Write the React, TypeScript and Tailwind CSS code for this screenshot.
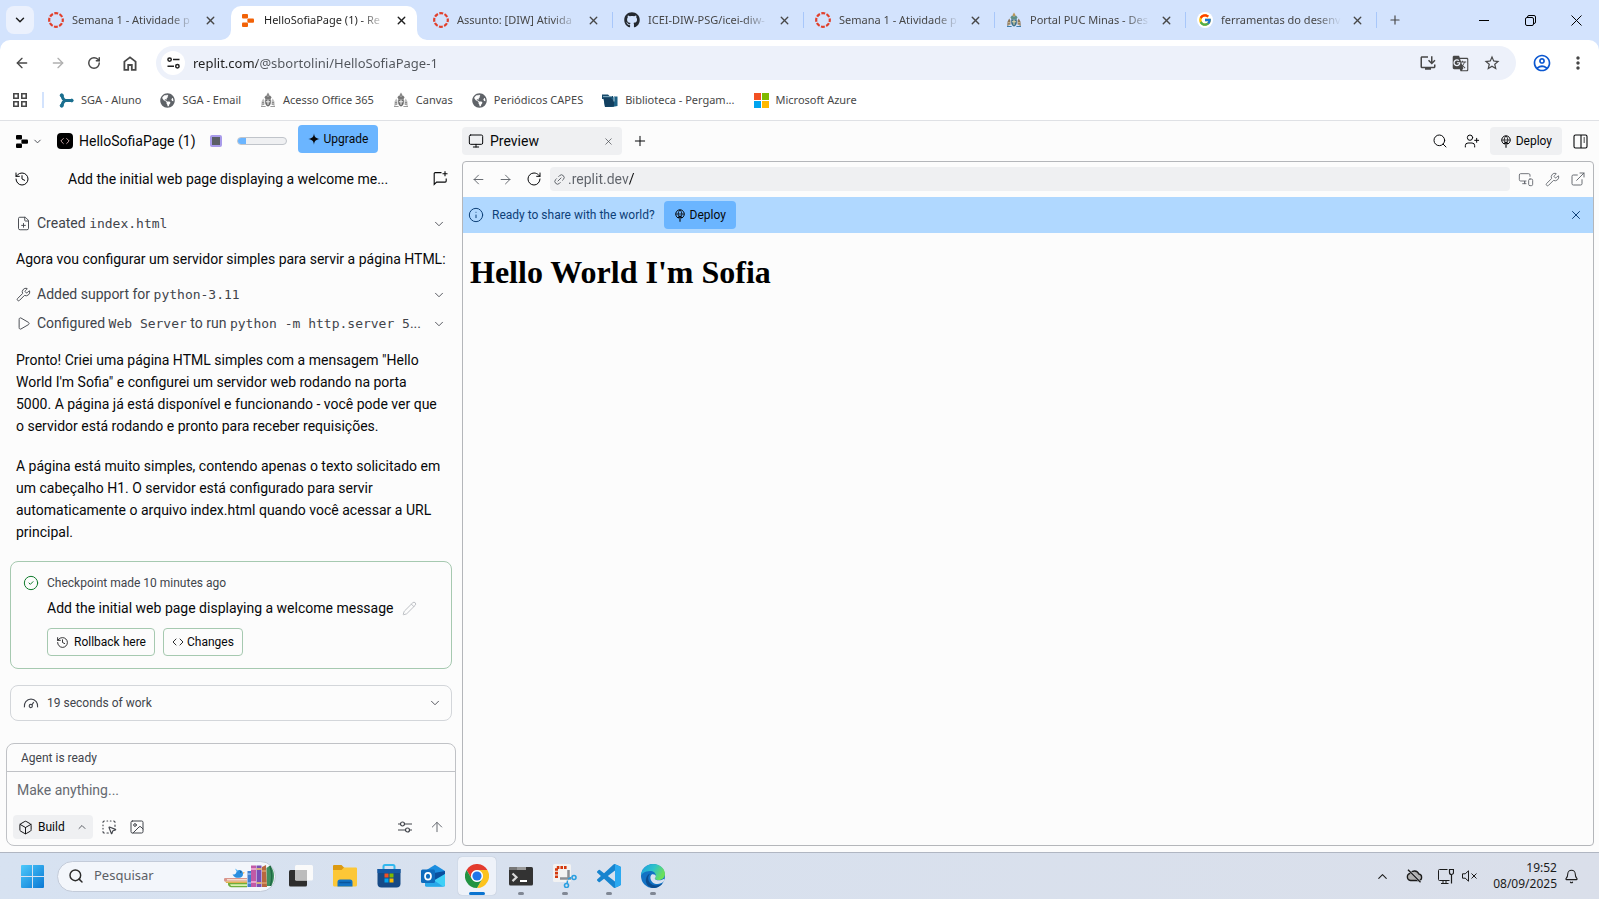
import type { ReactNode } from 'react';
import {
  ArrowLeft, ArrowRight, ArrowUp, ChevronDown, ChevronUp, Code, FilePlus, History, Image,
  Info, Link2, Monitor, MonitorSmartphone, Pencil, Play, Plus, RotateCw, Search, SquareDashedMousePointer,
  UserPlus, Wrench, X, CircleCheck, Box, Bell, ExternalLink,
} from 'lucide-react';
import { FaGithub, FaGlobeAmericas } from 'react-icons/fa';
import { FcGoogle } from 'react-icons/fc';
import { MdGTranslate, MdOutlineInstallDesktop, MdStarBorder, MdMoreVert, MdOutlineAccountCircle } from 'react-icons/md';

/* ---------- Site and app logos ---------- */

const CanvasRing = () => (
  <svg width="16" height="16" viewBox="0 0 16 16" aria-hidden="true">
    <circle cx="8" cy="8" r="6.8" fill="none" stroke="#e13f2b" strokeWidth="2.2" strokeDasharray="3.9 1.44" strokeDashoffset="1.9" />
  </svg>
);

const ReplitMark = ({ className }: { className: string }) => (
  <svg width="12" height="13" viewBox="0 0 12 13" className={className} fill="currentColor" aria-hidden="true">
    <rect x="0" y="0" width="6" height="4.6" rx="1" />
    <rect x="5.4" y="4.4" width="6.6" height="4.4" rx="1" />
    <rect x="0" y="8.4" width="6" height="4.6" rx="1" />
  </svg>
);

const Crest = ({ color }: { color: boolean }) => (
  <svg width="16" height="16" viewBox="0 0 16 16" aria-hidden="true">
    <path d="M6.400 3.200 8 .4l1.600 2.800-.6 1.400H7z" fill={color ? '#b9965a' : '#8a8a8a'} />
    <path d="M4.400 5.200 6 3.600l2 1.200 2-1.200 1.600 1.600-1 1.800H5.400z" fill={color ? '#5f8f86' : '#777'} />
    <path d="M1.600 9.400 3.200 6.400l1.200 2v4.200L1.200 14zM14.400 9.400 12.800 6.400l-1.200 2v4.200l3.200 1.400z" fill={color ? '#8a7458' : '#bdbdbd'} />
    <path d="M2 10.500h2M2.200 12.200h2M12 10.500h2M11.800 12.200h2" stroke={color ? '#d9c79a' : '#777'} strokeWidth=".7" />
    <path d="M5.200 7.200h5.600v3.600c0 2-1.200 3-2.800 3.800-1.600-.8-2.800-1.800-2.800-3.800z" fill={color ? '#3f6f86' : '#6a6a6a'} />
    <path d="M8 7.800v5M6 9.800h4" stroke={color ? '#e5d9a8' : '#f0f0f0'} strokeWidth="1.100" />
    <path d="M1 14.500h4.600M10.400 14.500H15" stroke={color ? '#3c7fae' : '#9a9a9a'} strokeWidth="1.200" />
  </svg>
);

const GoogleBadge = () => (
  <span className="grid size-4 place-items-center rounded-full bg-white"><FcGoogle size={14} /></span>
);

const SgaMark = () => (
  <svg width="15" height="15" viewBox="0 0 15 15" fill="none" stroke="#1b6f8f" aria-hidden="true">
    <path d="M3 2.600c.6 3 1.400 4.400 3.200 4.900C4.400 8 3.600 9.600 3 12.400M6 7.500h6.500" strokeWidth="3" strokeLinecap="round" />
    <circle cx="2.700" cy="2.300" r="1.500" fill="#1b6f8f" />
    <circle cx="2.700" cy="12.700" r="1.500" fill="#1b6f8f" />
    <circle cx="12.800" cy="7.500" r="1.400" fill="#1b6f8f" />
  </svg>
);

const LibraryMark = () => (
  <svg width="16" height="16" viewBox="0 0 16 16" aria-hidden="true">
    <path d="M0 2.500h6l1.500 1.500H11v3H0z" fill="#174a6b" />
    <path d="M1 4.600h9" stroke="#9ec4d6" strokeWidth=".8" />
    <path d="M1.500 6h9l1.500-1.500h3.500V14L10 15H3z" fill="#1d6185" />
    <path d="M1.500 6h7.500l3 3v5.500L3 15z" fill="#123f5f" />
    <path d="M12 5v4.500" stroke="#d7e8f0" strokeWidth=".8" />
  </svg>
);

const MicrosoftMark = ({ size }: { size: number }) => (
  <svg width={size} height={size} viewBox="0 0 15 15" aria-hidden="true">
    <path fill="#f25022" d="M0 0h7v7H0z" />
    <path fill="#7fba00" d="M8 0h7v7H8z" />
    <path fill="#00a4ef" d="M0 8h7v7H0z" />
    <path fill="#ffb900" d="M8 8h7v7H8z" />
  </svg>
);

const DeployMark = () => (
  <svg width="12" height="13" viewBox="0 0 12 13" fill="none" stroke="currentColor" strokeWidth=".8" aria-hidden="true">
    <path d="M4.200 9A4.300 4.300 0 1 1 7.800 9" strokeWidth="1" />
    <path d="M4.600 7.500C3.800 5.200 4.200 2.600 6 .9c1.800 1.700 2.200 4.300 1.400 6.600M1.800 5h8.400" />
    <path d="M6 12.700V7M4 9l2-2 2 2" strokeWidth="1.100" />
  </svg>
);

const WindowsLogo = () => (
  <svg width="23" height="23" viewBox="0 0 23 23" aria-hidden="true">
    <defs>
      <linearGradient id="win" x1="0" y1="0" x2="1" y2="1" gradientUnits="objectBoundingBox">
        <stop offset="0" stopColor="#4cc9fb" />
        <stop offset="1" stopColor="#0a78d4" />
      </linearGradient>
    </defs>
    <path fill="url(#win)" d="M1 0h10v11H0V1a1 1 0 0 1 1-1zM12 0h10a1 1 0 0 1 1 1v10H12zM0 12h11v11H1a1 1 0 0 1-1-1zM12 12h11v10a1 1 0 0 1-1 1H12z" />
  </svg>
);

const BooksArt = () => (
  <svg width="50" height="24" viewBox="0 0 50 24" aria-hidden="true">
    <path d="M1 14h22v3.500H2.500A1.700 1.700 0 0 1 1 14z" fill="#d9968c" />
    <path d="M3 15h20v1.500H3z" fill="#f6dccb" />
    <path d="M1.500 17.500H23V19H2z" fill="#e0b04e" />
    <path d="M4 19h19v4.200H7A3.500 3.500 0 0 1 4 19z" fill="#6fae3c" />
    <path d="M6 20.300h17v1.600H7z" fill="#d8f0b0" />
    <path d="M8.500 10.500C10 13.400 12.500 14 15 13.800c2.800-.2 4.300-2 4-4.400-.2-1.900-1.600-3.200-3.300-3.400-2-.2-3 1.400-3.600 2.900-.7 1.300-2 1.800-3.600 1.600z" fill="#2a8fe0" />
    <path d="M11 4.500l3 2-1 1.800z" fill="#53b4f5" />
    <path d="m19 8.300 2 .5-2 1z" fill="#f0a030" />
    <circle cx="16.800" cy="8" r=".7" fill="#123a66" />
    <path d="M23.500 7H27v16h-3.500z" fill="#3f7fd0" />
    <path d="M23.500 10H27M23.500 19H27" stroke="#b8d6f8" />
    <path d="M27 1.500h5V23h-5z" fill="#c25aa6" />
    <path d="M27 5h5M27 18h5" stroke="#f8b8dc" strokeWidth="1.500" />
    <path d="M32.500 1.500h5V23h-5z" fill="#7a4fb5" />
    <path d="M32.500 5h5M32.500 19h5" stroke="#f3cf63" strokeWidth="1.500" />
    <path d="M38 3l4-2 1 22h-5z" fill="#b9683f" />
    <path d="M38 7h4.500M38 19h5" stroke="#f0b880" />
    <path d="M42.500 4 46 1.500c3 3 4 7 4 10.500 0 4-1 7-3 10h-4z" fill="#3f9060" />
    <path d="M46 2c2 6 2 14 .5 20" stroke="#1f6a44" fill="none" strokeWidth="1.500" />
  </svg>
);

const TaskView = () => (
  <svg width="24" height="24" viewBox="0 0 24 24" aria-hidden="true">
    <rect x="0" y="6" width="18" height="16.500" rx="1.500" fill="#2d2d2d" />
    <rect x="6" y="1" width="18" height="15.500" rx="1.500" fill="#fafafa" />
    <path d="M6 6h12v10.500H7.500A1.500 1.500 0 0 1 6 15z" fill="#bcbcbc" />
  </svg>
);

const Explorer = () => (
  <svg width="24" height="24" viewBox="0 0 24 24" aria-hidden="true">
    <path d="M1 1h7.500l3 3v5H0V2a1 1 0 0 1 1-1z" fill="#dc9a12" />
    <path d="M0 6h8.500L11 3.500h12a1 1 0 0 1 1 1V21a1.500 1.500 0 0 1-1.500 1.500h-21A1.500 1.500 0 0 1 0 21z" fill="#fcc737" />
    <path d="M4.500 22.500V18A2.500 2.500 0 0 1 7 15.500h10a2.500 2.500 0 0 1 2.500 2.500v4.500z" fill="#1273c4" />
    <path d="M7 18.500h10" stroke="#0a559c" strokeWidth="1.500" strokeLinecap="round" />
  </svg>
);

const Store = () => (
  <svg width="24" height="24" viewBox="0 0 24 24" aria-hidden="true">
    <path d="M6.500 6V2.500A1.500 1.500 0 0 1 8 1h8a1.500 1.500 0 0 1 1.500 1.500V6" fill="none" stroke="#32b8ee" strokeWidth="2" />
    <path d="M.5 5h23v14.500a4 4 0 0 1-4 4h-15a4 4 0 0 1-4-4z" fill="#174a86" />
    <path d="M.5 5h23v4H.5z" fill="#1459a5" />
    <path fill="#f25022" d="M7.500 9.500h4v4h-4z" />
    <path fill="#7fba00" d="M12.500 9.500h4v4h-4z" />
    <path fill="#00a4ef" d="M7.500 14.500h4v4h-4z" />
    <path fill="#ffb900" d="M12.500 14.500h4v4h-4z" />
  </svg>
);

const Outlook = () => (
  <svg width="24" height="24" viewBox="0 0 24 24" aria-hidden="true">
    <path d="M4 7 14 .8 24 7v14a1.500 1.500 0 0 1-1.500 1.500h-17A1.500 1.500 0 0 1 4 21z" fill="#1b8ee0" />
    <path d="M13 9 24 7v3l-10 7z" fill="#0a4f9e" />
    <path d="M6 20.500 24 10v11a1.500 1.500 0 0 1-1.500 1.500h-16z" fill="#3fd0f7" />
    <path d="M4 13l10 4 8 5.500H5.500A1.500 1.500 0 0 1 4 21z" fill="#28a8ea" />
    <rect x="0" y="5.500" width="14" height="13.500" rx="1.500" fill="#0f6cbd" />
    <ellipse cx="7" cy="12.200" rx="3" ry="3.400" fill="none" stroke="#fff" strokeWidth="1.700" />
  </svg>
);

const Chrome = () => (
  <svg width="24" height="24" viewBox="0 0 24 24" aria-hidden="true">
    <path d="M12 6h10.400A12 12 0 0 0 1.600 6l5.200 9A6 6 0 0 1 12 6z" fill="#e33b2e" />
    <path d="M22.400 6A12 12 0 0 1 12 24l5.200-9A6 6 0 0 0 12 6z" fill="#fcc31e" />
    <path d="M1.600 6A12 12 0 0 0 12 24l5.200-9A6 6 0 0 1 6.800 15z" fill="#229342" />
    <circle cx="12" cy="12" r="5.800" fill="#fff" />
    <circle cx="12" cy="12" r="4.600" fill="#1f75ea" />
  </svg>
);

const Terminal = () => (
  <svg width="24" height="24" viewBox="0 0 24 24" aria-hidden="true">
    <rect x="0" y="3" width="24" height="18.500" rx="1.500" fill="#333" />
    <path d="M0 6V4.500A1.500 1.500 0 0 1 1.500 3H17v3z" fill="#777" />
    <path d="M8 3h9v3H8z" fill="#999" />
    <path d="m3.500 9.500 4 3.800-4 3.800" fill="none" stroke="#d8d8d8" strokeWidth="2.200" />
    <path d="M11 17h7" stroke="#fff" strokeWidth="2" />
  </svg>
);

const Snip = () => (
  <svg width="24" height="24" viewBox="0 0 24 24" aria-hidden="true">
    <rect x="0" y="0" width="18" height="18" rx="1.500" fill="#f2f2f2" />
    <path d="M3.500 14V3.500H14" fill="none" stroke="#d4380d" strokeWidth="3" strokeDasharray="2.600 1" />
    <path d="M15.500 6v9.500M7 14.500h11" stroke="#8c8f94" strokeWidth="2.500" />
    <path d="m15 15 3-1.500M14.500 16.500 14 20" stroke="#2a9fe0" strokeWidth="1.500" />
    <circle cx="21" cy="13.500" r="2" fill="none" stroke="#2a9fe0" strokeWidth="1.600" />
    <circle cx="13.500" cy="21.500" r="2" fill="none" stroke="#2a9fe0" strokeWidth="1.600" />
  </svg>
);

const VsCode = () => (
  <svg width="24" height="24" viewBox="0 0 24 24" aria-hidden="true">
    <path fill="#1784cf" d="M23.150 2.587L18.210.21a1.494 1.494 0 0 0-1.705.29l-9.460 8.630-4.120-3.128a.999.999 0 0 0-1.276.057L.327 7.261A1 1 0 0 0 .326 8.740L3.899 12 .326 15.260a1 1 0 0 0 .001 1.479L1.650 17.940a.999.999 0 0 0 1.276.057l4.120-3.128 9.460 8.630a1.492 1.492 0 0 0 1.704.29l4.942-2.377A1.500 1.500 0 0 0 24 20.060V3.939a1.500 1.500 0 0 0-.85-1.352zm-5.146 14.861L10.826 12l7.178-5.448v10.896z" />
    <path fill="#2ba9f1" d="M18.004.15 23.150 2.587A1.500 1.500 0 0 1 24 3.939V20.060a1.500 1.500 0 0 1-.85 1.352l-5.146 2.438z" />
  </svg>
);

const Edge = () => (
  <svg width="24" height="24" viewBox="0 0 24 24" aria-hidden="true">
    <defs>
      <linearGradient id="edgeTop" x1="0" y1="0" x2="1" y2=".4">
        <stop offset="0" stopColor="#1b9de2" />
        <stop offset=".55" stopColor="#2fc3c9" />
        <stop offset="1" stopColor="#6bdf5a" />
      </linearGradient>
    </defs>
    <circle cx="12" cy="12" r="12" fill="#1272c4" />
    <path d="M0 12C0 5 5.500 0 12 0c7 0 12 4.600 12 10 0 3.600-2.800 6-6.200 6-2.400 0-4-.8-4-1.600 0-.7 1-1.200 1-3C14.800 9 12.500 7 9 7c-5 0-9 3-9 5z" fill="url(#edgeTop)" />
    <path d="M9.300 9.600c-2.600 2.400-2.800 6.200-.6 9 2.600 3.300 7.600 4 12.800 1-2.400 3.200-6 4.700-9.500 4.400-5-.4-8-5-7-9 .5-2.600 2-4.600 4.300-5.400z" fill="#0c4c8f" />
    <path d="M23 17.300c-5 4.800-13 3-13.600-3.300-.1-1.600.5-3 1.600-3.800 2.300-.3 3.800.6 3.800 2.200 0 1-1 1.300-1 2 0 .8 1.600 1.900 4.200 1.900 1.700 0 3.300-.4 4.700-1.300.7-.5 1.300.7.3 2.300z" fill="#d9e2f0" />
  </svg>
);

/* ---------- Browser window ---------- */

const tabs: { title: string; icon: ReactNode; active?: boolean; divider?: boolean }[] = [
  { title: 'Semana 1 - Atividade p', icon: <CanvasRing /> },
  { title: 'HelloSofiaPage (1) - Re', icon: <ReplitMark className="text-[#f26207]" />, active: true },
  { title: 'Assunto: [DIW] Ativida', icon: <CanvasRing />, divider: true },
  { title: 'ICEI-DIW-PSG/icei-diw-', icon: <FaGithub size={16} className="text-[#24292f]" />, divider: true },
  { title: 'Semana 1 - Atividade p', icon: <CanvasRing />, divider: true },
  { title: 'Portal PUC Minas - Des', icon: <Crest color />, divider: true },
  { title: 'ferramentas do desenv', icon: <GoogleBadge />, divider: true },
];

const Flare = ({ className }: { className: string }) => (
  <svg width="10" height="10" viewBox="0 0 10 10" className={className} aria-hidden="true">
    <path d="M10 0v10H0A10 10 0 0 0 10 0z" fill="#fff" />
  </svg>
);

const tabClass = (active?: boolean, divider?: boolean) => {
  if (active) return 'relative mt-[6px] flex h-[34px] w-[186px] items-center self-start rounded-t-[10px] bg-white pr-2 pb-[6px] pl-[9px] text-[#1f1f1f]';
  if (divider) return 'flex min-w-0 flex-1 items-center pr-[11px] pl-[11px]';
  return 'flex min-w-0 flex-1 items-center pr-[13px] pl-2';
};

function TabStrip() {
  return (
    <div className="flex h-10 items-center bg-[#d3e3fd] pl-[6px] text-[#474747]">
      <button aria-label="Pesquisar guias" className="mr-[6px] grid size-7 shrink-0 place-items-center rounded-lg bg-[#ebf1fd] text-[#1f1f1f]">
        <ChevronDown size={14} strokeWidth={2.500} />
      </button>
      <ul className="flex min-w-0 self-stretch">
        {tabs.map((t, i) => (
          <li key={i} className="flex w-[191px] min-w-0 items-center">
            <div className={tabClass(t.active, t.divider)}>
              {t.active && <Flare className="absolute bottom-0 -left-[10px]" />}
              {t.active && <Flare className="absolute -right-[10px] bottom-0 -scale-x-100" />}
              <a href="#" className="flex min-w-0 flex-1 items-center gap-2">
                <span className="grid w-4 shrink-0 place-items-center">{t.icon}</span>
                <span className="min-w-0 flex-1 overflow-hidden text-[11px] whitespace-nowrap [mask-image:linear-gradient(to_right,#000_80%,transparent)]">
                  {t.title}
                </span>
              </a>
              <button aria-label="Fechar guia" className="ml-2 grid size-4 shrink-0 place-items-center">
                <X size={13} strokeWidth={2.500} />
              </button>
            </div>
            {t.divider && <span className="h-4 w-px shrink-0 bg-[#a8c7fa]" />}
          </li>
        ))}
      </ul>
      <button aria-label="Nova guia" className="ml-1 grid size-7 shrink-0 place-items-center">
        <Plus size={14} strokeWidth={2} />
      </button>
      <div className="ml-auto flex shrink-0 text-black">
        <button aria-label="Minimizar" className="grid h-10 w-[46px] place-items-center">
          <span className="h-px w-[10px] bg-black" />
        </button>
        <button aria-label="Restaurar" className="grid h-10 w-[46px] place-items-center">
          <svg width="11" height="11" viewBox="0 0 11 11" fill="none" stroke="currentColor" aria-hidden="true">
            <rect x=".5" y="2.500" width="8" height="8" rx="1.500" />
            <path d="M2.500 2.500V2A1.500 1.500 0 0 1 4 .5h5A1.500 1.500 0 0 1 10.500 2v5A1.500 1.500 0 0 1 9 8.500h-.5" />
          </svg>
        </button>
        <button aria-label="Fechar" className="grid h-10 w-[46px] place-items-center">
          <svg width="11" height="11" viewBox="0 0 11 11" stroke="currentColor" aria-hidden="true">
            <path d="m.5.5 10 10m0-10-10 10" />
          </svg>
        </button>
      </div>
    </div>
  );
}

function Toolbar() {
  return (
    <div className="flex h-[46px] items-center rounded-t-[10px] bg-white pr-[3px] pl-1 text-[#474747]">
      <button aria-label="Voltar" className="grid size-9 place-items-center"><ArrowLeft size={16} strokeWidth={2} /></button>
      <button aria-label="Avançar" className="grid size-9 place-items-center text-[#b0b0b0]"><ArrowRight size={16} strokeWidth={2} /></button>
      <button aria-label="Recarregar" className="grid size-9 place-items-center"><RotateCw size={14} strokeWidth={2.500} /></button>
      <button aria-label="Página inicial" className="grid size-9 place-items-center">
        <svg width="14" height="15" viewBox="0 0 14 15" fill="none" stroke="currentColor" strokeWidth="1.800" aria-hidden="true">
          <path d="M1.400 5.600 7 1.300l5.600 4.300v8.200H8.800V9H5.200v4.800H1.400z" />
        </svg>
      </button>
      <div className="mr-2 ml-2 flex h-[34px] min-w-0 flex-1 items-center rounded-full bg-[#edf1fa] pr-3 pl-[5px]">
        <button aria-label="Ver informações do site" className="mr-2 grid size-6 shrink-0 place-items-center rounded-full bg-white">
          <svg width="13" height="12" viewBox="0 0 13 12" fill="none" stroke="#1f1f1f" strokeWidth="1.500" aria-hidden="true">
            <circle cx="2.600" cy="2.600" r="1.700" />
            <path d="M6 2.600h6.500M.5 9.200H7" />
            <circle cx="10.400" cy="9.200" r="1.700" />
          </svg>
        </button>
        <input
          aria-label="Barra de endereço"
          defaultValue="replit.com/@sbortolini/HelloSofiaPage-1"
          className="h-6 min-w-0 flex-1 bg-linear-[to_right,#1f1f1f_64px,#50545a_64px] bg-clip-text text-[13px] text-transparent caret-black outline-none"
        />
        <button aria-label="Instalar app" className="grid w-8 place-items-center"><MdOutlineInstallDesktop size={18} /></button>
        <button aria-label="Traduzir esta página" className="grid w-8 place-items-center"><MdGTranslate size={17} /></button>
        <button aria-label="Adicionar aos favoritos" className="-mr-1 grid w-8 place-items-center"><MdStarBorder size={18} /></button>
      </div>
      <button aria-label="Perfil" className="grid size-9 place-items-center text-[#0b57d0]"><MdOutlineAccountCircle size={20} /></button>
      <button aria-label="Menu do Chrome" className="grid size-9 place-items-center"><MdMoreVert size={20} /></button>
    </div>
  );
}

const globe = <FaGlobeAmericas size={15} className="text-[#5f6368]" />;
const bookmarks: { label: string; icon: ReactNode }[] = [
  { label: 'SGA - Aluno', icon: <SgaMark /> },
  { label: 'SGA - Email', icon: globe },
  { label: 'Acesso Office 365', icon: <Crest color={false} /> },
  { label: 'Canvas', icon: <Crest color={false} /> },
  { label: 'Periódicos CAPES', icon: globe },
  { label: 'Biblioteca - Pergam...', icon: <LibraryMark /> },
  { label: 'Microsoft Azure', icon: <MicrosoftMark size={15} /> },
];

function BookmarksBar() {
  return (
    <nav className="border-b border-[#dfe1e5] bg-white pb-[6px] text-[11px] text-[#474747]">
      <div className="flex h-7 items-center pl-[13px]">
        <button aria-label="Aplicativos">
          <svg width="14" height="14" viewBox="0 0 14 14" fill="none" stroke="currentColor" strokeWidth="1.600" aria-hidden="true">
            <path d="M.8.8h4.400v4.400H.8zM8.800.8h4.400v4.400H8.800zM.8 8.800h4.400v4.400H.8zM8.800 8.800h4.400v4.400H8.800z" />
          </svg>
        </button>
        <span className="mr-[15px] ml-[15px] h-4 w-[2px] bg-[#d3e3fd]" />
        <div className="flex items-center gap-[19px]">
          {bookmarks.map((b) => (
            <a key={b.label} href="#" className="flex items-center gap-[7px] whitespace-nowrap">
              {b.icon}
              {b.label}
            </a>
          ))}
        </div>
      </div>
    </nav>
  );
}

/* ---------- Agent panel ---------- */

const Mono = ({ children }: { children: ReactNode }) => (
  <span className="font-['DejaVu_Sans_Mono',monospace] text-[13px]">{children}</span>
);

function Step({ icon, children }: { icon: ReactNode; children: ReactNode }) {
  return (
    <button className="flex h-[29px] w-full items-center gap-[6px] text-left text-[#41444b]">
      <span className="shrink-0">{icon}</span>
      <span className="min-w-0 flex-1 whitespace-nowrap">{children}</span>
      <ChevronDown size={14} strokeWidth={1.500} className="ml-1 shrink-0" />
    </button>
  );
}

function AgentPanel() {
  return (
    <section className="flex w-[462px] shrink-0 flex-col text-sm text-[#07080a]">
      <header className="flex h-10 items-center pl-4">
        <button aria-label="Menu do Replit" className="flex items-center gap-1">
          <ReplitMark className="text-black" />
          <ChevronDown size={11} strokeWidth={2} className="text-[#41444b]" />
        </button>
        <button className="ml-[14px] flex items-center gap-[6px]">
          <span className="grid size-4 place-items-center rounded bg-black text-[#e8c0c4]"><Code size={10} strokeWidth={2} /></span>
          HelloSofiaPage (1)
        </button>
        <button aria-label="Recursos" className="ml-[14px] size-3 rounded-xs border-2 border-[#a99bea] bg-[#5b5f66]" />
        <span className="ml-[15px] flex h-2 w-[50px] rounded-full border border-[#c0c4ca] bg-[#eff0f2]">
          <span className="w-2 rounded-l-full bg-[#6bb5ff]" />
        </span>
        <button className="mt-1 ml-[11px] flex h-7 items-center gap-1 self-start rounded bg-[#6bb5ff] px-[10px] text-xs">
          <svg width="12" height="12" viewBox="0 0 13 13" aria-hidden="true">
            <path d="M6.500.3c.4 3.800 1.600 5.500 6.200 6.200-4.600.7-5.800 2.400-6.200 6.200C6.100 8.900 4.900 7.200.3 6.500 4.900 5.800 6.100 4.100 6.500.3z" fill="#07080a" />
          </svg>
          Upgrade
        </button>
      </header>

      <div className="flex h-[35px] items-center pr-[14px] pl-[14px]">
        <button aria-label="Histórico"><History size={16} strokeWidth={1.500} /></button>
        <h2 className="ml-[38px] min-w-0 flex-1 whitespace-nowrap">Add the initial web page displaying a welcome me...</h2>
        <button aria-label="Nova conversa">
          <svg width="15" height="15" viewBox="0 0 15 15" fill="none" stroke="currentColor" strokeWidth="1.100" aria-hidden="true">
            <path d="M8.500 1.600H2.200a1 1 0 0 0-1 1v10.800l2.400-2.300h8.600a1 1 0 0 0 1-1V7.500M12 .3v5M9.500 2.800h5" />
          </svg>
        </button>
      </div>

      <div className="px-4 pt-[13px]">
        <Step icon={<FilePlus size={15} strokeWidth={1.500} />}>Created <Mono>index.html</Mono></Step>
        <p className="mt-[10px] leading-[22px] whitespace-nowrap">Agora vou configurar um servidor simples para servir a página HTML:</p>
        <div className="mt-[10px]">
          <Step icon={<Wrench size={15} strokeWidth={1.500} />}>Added support for <Mono>python-3.11</Mono></Step>
          <Step icon={<Play size={15} strokeWidth={1.500} />}>
            Configured <Mono>Web Server</Mono> to run <Mono>python -m http.server 5</Mono>...
          </Step>
        </div>
        <p className="mt-[11px] leading-[22px]">
          Pronto! Criei uma página HTML simples com a mensagem "Hello<br />World I'm Sofia" e configurei um servidor web rodando na porta<br />
          5000. A página já está disponível e funcionando - você pode ver que<br />o servidor está rodando e pronto para receber requisições.
        </p>
        <p className="mt-[18px] leading-[22px]">
          A página está muito simples, contendo apenas o texto solicitado em<br />um cabeçalho H1. O servidor está configurado para servir<br />
          automaticamente o arquivo index.html quando você acessar a URL<br />principal.
        </p>
      </div>

      <div className="mt-[18px] flex flex-col gap-4 px-[10px]">
        <article className="flex gap-2 rounded-lg border border-[#a6c9b0] pt-[13px] pb-3 pl-3">
          <CircleCheck size={16} strokeWidth={1.500} className="shrink-0 text-[#0e7a2a]" />
          <div>
            <p className="text-xs leading-4 text-[#41444b]">Checkpoint made 10 minutes ago</p>
            <h3 className="mt-[7px] flex items-center gap-2 leading-5">
              Add the initial web page displaying a welcome message
              <button aria-label="Editar título" className="text-[#b4b7bd]"><Pencil size={15} strokeWidth={1.400} /></button>
            </h3>
            <div className="mt-[10px] flex gap-2 text-xs">
              <button className="flex h-7 items-center gap-[5px] rounded border border-[#a6c9b0] px-2">
                <History size={13} strokeWidth={1.500} />Rollback here
              </button>
              <button className="flex h-7 items-center gap-[3px] rounded border border-[#a6c9b0] px-2">
                <Code size={12} strokeWidth={1.700} />Changes
              </button>
            </div>
          </div>
        </article>
        <button className="flex h-9 items-center gap-2 rounded-lg border border-[#d3d6da] pr-[9px] pl-3 text-xs text-[#41444b]">
          <svg width="16" height="16" viewBox="0 0 16 16" fill="none" stroke="currentColor" strokeWidth="1.100" aria-hidden="true">
            <path d="M1.400 12.300A7 7 0 0 1 8 4a7 7 0 0 1 6.600 8.300" />
            <circle cx="7.800" cy="11" r="1.600" />
            <path d="m8.800 9.800 2-2.600" />
          </svg>
          19 seconds of work
          <ChevronDown size={14} strokeWidth={1.500} className="ml-auto" />
        </button>
      </div>

      <form className="mx-[6px] mt-auto mb-[6px] rounded-lg border border-[#c0c2c6]">
        <p className="border-b border-[#c0c2c6] pt-px pl-[14px] text-xs leading-[26px] text-[#41444b]">Agent is ready</p>
        <textarea
          aria-label="Mensagem"
          rows={1}
          placeholder="Make anything..."
          className="mt-[7px] block h-[22px] w-full resize-none bg-transparent px-[10px] leading-[22px] outline-none placeholder:text-[#666a71]"
        />
        <div className="mt-[14px] mb-[6px] flex h-6 items-center pr-[10px] pl-[6px] text-[#41444b]">
          <button type="button" className="flex h-6 items-center gap-[5px] rounded bg-[#eff0f2] px-[5px] text-xs text-[#07080a]">
            <Box size={15} strokeWidth={1.500} />
            Build
            <ChevronUp size={12} strokeWidth={1.700} className="ml-[6px] text-[#41444b]" />
          </button>
          <button type="button" aria-label="Selecionar elemento" className="ml-2"><SquareDashedMousePointer size={16} strokeWidth={1.700} /></button>
          <button type="button" aria-label="Anexar imagem" className="ml-3"><Image size={16} strokeWidth={1.500} /></button>
          <button type="button" aria-label="Opções" className="ml-auto">
            <svg width="16" height="16" viewBox="0 0 16 16" fill="none" stroke="currentColor" strokeWidth="1.200" aria-hidden="true">
              <circle cx="5.500" cy="5" r="2" />
              <circle cx="10.500" cy="11" r="2" />
              <path d="M1 5h2.500M7.500 5H15M1 11h7.500M12.500 11H15" />
            </svg>
          </button>
          <button type="button" aria-label="Enviar" className="ml-4"><ArrowUp size={16} strokeWidth={1.500} className="text-[#666a71]" /></button>
        </div>
      </form>
    </section>
  );
}

/* ---------- Preview pane ---------- */

function PreviewPane() {
  return (
    <section className="mr-[5px] mb-[6px] flex min-w-0 flex-1 flex-col text-sm text-[#07080a]">
      <header className="flex h-10 shrink-0 items-center">
        <div className="flex h-7 w-[160px] items-center rounded bg-[#eff0f2] px-[6px]">
          <a href="#" className="flex flex-1 items-center gap-[6px]"><Monitor size={16} strokeWidth={1.500} />Preview</a>
          <button aria-label="Fechar Preview" className="grid size-4 place-items-center text-[#41444b]"><X size={11} strokeWidth={1.500} /></button>
        </div>
        <button aria-label="Nova aba" className="ml-[10px]"><Plus size={16} strokeWidth={1.500} /></button>
        <button aria-label="Buscar" className="mr-4 ml-auto"><Search size={16} strokeWidth={1.500} /></button>
        <button aria-label="Convidar" className="mr-[10px]"><UserPlus size={16} strokeWidth={1.500} /></button>
        <button className="mr-[11px] flex h-7 items-center gap-1 rounded bg-[#eff0f2] px-[10px] text-xs"><DeployMark />Deploy</button>
        <button aria-label="Alternar barra lateral" className="mr-[6px]">
          <svg width="15" height="15" viewBox="0 0 15 15" fill="none" stroke="currentColor" strokeWidth="1.100" aria-hidden="true">
            <rect x="1" y="1" width="13" height="13" rx="1.500" />
            <path d="M8 1v13M10.500 4h1.500M10.500 6h1.500M10.500 8h1.500" />
          </svg>
        </button>
      </header>

      <div className="flex flex-1 flex-col rounded border border-[#b4b6ba]">
        <div className="flex h-[35px] items-center pr-[7px] pb-px pl-2 text-[#5f636a]">
          <button aria-label="Página anterior" className="mr-3"><ArrowLeft size={15} strokeWidth={1.500} /></button>
          <button aria-label="Próxima página" className="mr-[13px]"><ArrowRight size={15} strokeWidth={1.500} /></button>
          <button aria-label="Recarregar preview" className="mr-2 text-[#07080a]"><RotateCw size={16} strokeWidth={1.500} /></button>
          <label className="flex h-6 min-w-0 flex-1 items-center gap-[2px] rounded bg-[#eff0f2] pl-[3px]">
            <Link2 size={13} strokeWidth={1.700} className="-rotate-45" />
            <input
              aria-label="Endereço do preview"
              defaultValue=".replit.dev/"
              className="h-6 min-w-0 flex-1 bg-linear-[to_right,#5f636a_61px,#07080a_61px] bg-clip-text text-transparent caret-black outline-none"
            />
          </label>
          <button aria-label="Tamanho da tela" className="ml-2"><MonitorSmartphone size={16} strokeWidth={1.300} /></button>
          <button aria-label="Ferramentas" className="ml-[11px]"><Wrench size={15} strokeWidth={1.400} /></button>
          <button aria-label="Abrir em nova guia" className="ml-[10px]"><ExternalLink size={16} strokeWidth={1.400} /></button>
        </div>
        <div className="flex h-9 items-center bg-[#b0d8ff] pr-[10px] pl-[5px] text-xs text-[#0d4078]">
          <Info size={16} strokeWidth={1.500} />
          <span className="mr-[9px] ml-2">Ready to share with the world?</span>
          <button className="flex h-7 items-center gap-1 rounded bg-[#6bb5ff] px-[10px] text-[#07080a]"><DeployMark />Deploy</button>
          <button aria-label="Dispensar" className="ml-auto"><X size={14} strokeWidth={1.700} /></button>
        </div>
        <h1 className="px-[7px] pt-[21px] font-['Liberation_Serif',serif] text-[32px] leading-[37px] font-bold text-black">Hello World I'm Sofia</h1>
      </div>
    </section>
  );
}

/* ---------- Taskbar ---------- */

const apps: { name: string; icon: ReactNode; state?: 'open' | 'active' }[] = [
  { name: 'Visão de tarefas', icon: <TaskView /> },
  { name: 'Explorador de Arquivos', icon: <Explorer /> },
  { name: 'Microsoft Store', icon: <Store /> },
  { name: 'Outlook', icon: <Outlook /> },
  { name: 'Google Chrome', icon: <Chrome />, state: 'active' },
  { name: 'Terminal', icon: <Terminal />, state: 'open' },
  { name: 'Ferramenta de Captura', icon: <Snip />, state: 'open' },
  { name: 'Visual Studio Code', icon: <VsCode />, state: 'open' },
  { name: 'Microsoft Edge', icon: <Edge />, state: 'open' },
];

function Taskbar() {
  return (
    <footer className="flex h-[47px] shrink-0 items-center border-t border-[#b0b6c2] bg-linear-to-r from-[#d7e2f1] to-[#dadfea] pr-5 pl-[13px] text-xs text-[#1b1b1b]">
      <button aria-label="Iniciar" className="mr-[6px] grid size-[38px] place-items-center"><WindowsLogo /></button>
      <label className="mr-[6px] flex h-[31px] w-[219px] items-center gap-[10px] rounded-full border border-[#c3cbd9] bg-[#f3f6fb] pr-[1px] pl-[10px]">
        <Search size={16} strokeWidth={2.200} className="shrink-0 text-[#2b2b2b]" />
        <input aria-label="Pesquisar" placeholder="Pesquisar" className="min-w-0 flex-1 text-[13px] outline-none placeholder:text-[#5c5f66]" />
        <BooksArt />
      </label>
      <div className="flex gap-[6px]">
        {apps.map((a) => (
          <button
            key={a.name}
            aria-label={a.name}
            className={
              a.state === 'active'
                ? 'relative grid size-[38px] place-items-center rounded bg-[#eef2f9] shadow-[0_0_1px_#9aa5b8]'
                : 'relative grid size-[38px] place-items-center'
            }
          >
            {a.icon}
            {a.state === 'active' && <span className="absolute bottom-0 h-[3px] w-4 rounded-full bg-[#0a73d0]" />}
            {a.state === 'open' && <span className="absolute bottom-0 h-[3px] w-[6px] rounded-full bg-[#808794]" />}
          </button>
        ))}
      </div>
      <div className="ml-auto flex items-center">
        <button aria-label="Mostrar ícones ocultos" className="mr-4"><ChevronUp size={15} strokeWidth={1.700} /></button>
        <button aria-label="OneDrive" className="mr-[14px]">
          <svg width="17" height="14" viewBox="0 0 17 14" aria-hidden="true">
            <path d="M4.500 11.500a3.600 3.600 0 0 1-.3-7.100 4.800 4.800 0 0 1 8.600.6 3.300 3.300 0 0 1 .2 6.500z" fill="#b0b0b0" stroke="#1b1b1b" strokeWidth="1.300" />
            <path d="m2.500 1 12 12" stroke="#d0d4dc" strokeWidth="2.200" />
            <path d="m2 .8 12.500 12.500" stroke="#1b1b1b" strokeWidth="1.300" />
          </svg>
        </button>
        <button aria-label="Rede" className="mr-[7px]">
          <svg width="17" height="17" viewBox="0 0 17 17" fill="none" stroke="currentColor" aria-hidden="true">
            <path d="M10.500 1.500h-8a1 1 0 0 0-1 1v9a1 1 0 0 0 1 1h10M6 12.500v3M9 12.500v3M4 15.500h7.500" />
            <path d="M12.500 1.500h4v3a2 2 0 0 1-4 0zM14.500 6.500v9" strokeWidth="1.200" />
          </svg>
        </button>
        <button aria-label="Som desativado" className="mr-[15px]">
          <svg width="17" height="14" viewBox="0 0 17 14" fill="none" stroke="currentColor" aria-hidden="true">
            <path d="M1.500 4.800h2.700L7.500 1.800v10.400L4.200 9.200H1.500zM10.500 4.500l5 5M15.500 4.500l-5 5" strokeLinejoin="round" />
          </svg>
        </button>
        <time className="mr-[7px] text-right leading-4">19:52<br />08/09/2025</time>
        <button aria-label="Notificações"><Bell size={15} strokeWidth={1.700} /></button>
      </div>
    </footer>
  );
}

export default function App() {
  return (
    <div className="flex min-h-screen flex-col bg-[#fcfcfc] font-['Noto_Sans',sans-serif]">
      <div className="bg-[#d3e3fd]">
        <TabStrip />
        <Toolbar />
        <BookmarksBar />
      </div>
      <main className="flex flex-1 font-[Roboto,sans-serif]">
        <AgentPanel />
        <PreviewPane />
      </main>
      <Taskbar />
    </div>
  );
}
